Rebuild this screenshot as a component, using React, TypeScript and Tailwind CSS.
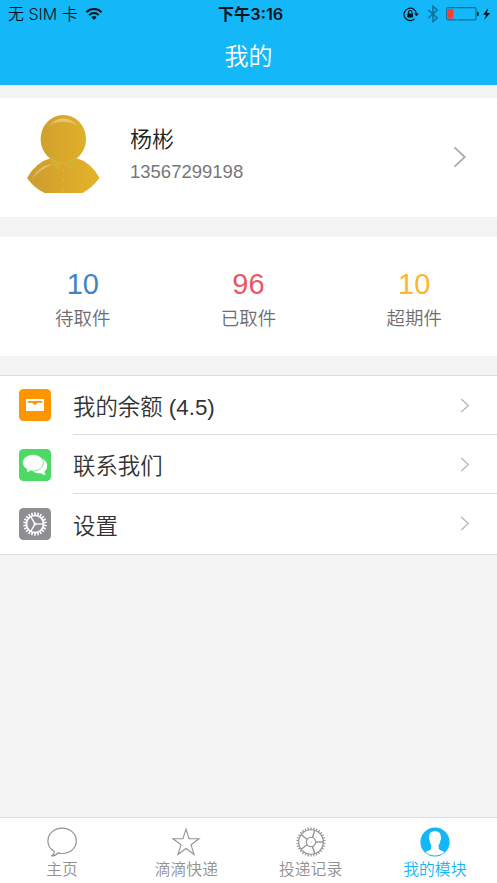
import React from 'react';

const stats = [
  { value: '10', label: '待取件', color: 'text-[#3d85c6]' },
  { value: '96', label: '已取件', color: 'text-[#ec5565]' },
  { value: '10', label: '超期件', color: 'text-[#fdb62b]' },
];

const Wifi = () => (
  <svg className="ml-[7px] h-[14px] w-[18px]" viewBox="0 0 18 14" fill="none" stroke="#03151d" strokeWidth="2">
    <path d="M1.4 5.200a10.800 10.800 0 0 1 15.200 0" />
    <path d="M4.200 8.100a6.800 6.800 0 0 1 9.600 0" />
    <path d="M6.400 10.300a3.700 3.700 0 0 1 5.200 0L9 13z" fill="#03151d" stroke="none" />
  </svg>
);

const RotationLock = () => (
  <svg className="h-[15px] w-[17px]" viewBox="0 0 17 15" fill="none" stroke="#03151d">
    <path d="M13.400 7A6.200 6.200 0 1 0 11.600 11.800" strokeWidth="1.200" />
    <path d="M11 6.600h4.900l-2.400 2.700z" fill="#03151d" stroke="none" />
    <rect x="4.400" y="6.400" width="5.600" height="4.200" rx=".5" fill="#03151d" stroke="none" />
    <path d="M5.500 7V5.200a1.700 1.700 0 0 1 3.400 0V7" strokeWidth="1.100" />
  </svg>
);

const Bluetooth = () => (
  <svg className="ml-[7px] h-[18px] w-[12px]" viewBox="0 0 12 18" fill="none" stroke="#0a7198" strokeWidth="1.500">
    <path d="M1.300 5l9 8L6 16.600V1.400L10.300 5l-9 8" />
  </svg>
);

const Battery = () => (
  <svg className="ml-[7px] h-[14px] w-[46px]" viewBox="0 0 46 14">
    <rect x=".7" y=".7" width="29.400" height="12.200" rx="1.600" fill="none" stroke="#0a7198" strokeWidth="1.200" />
    <rect x="1.800" y="2" width="5.400" height="9.600" fill="#ff3b30" />
    <path d="M31.200 4.500q1.700.3 1.700 2.400t-1.700 2.400z" fill="#03151d" />
    <path d="M42.300 1l-5.200 6.700h3L38.200 13l6-7.100h-3.200z" fill="#03151d" />
  </svg>
);

const Avatar = () => (
  <svg className="mb-[10px] h-[80px] w-[74px] shrink-0" viewBox="0 0 74 80">
    <defs>
      <linearGradient id="gold" x1="0" x2="74" y1="0" y2="0" gradientUnits="userSpaceOnUse">
        <stop offset="0" stopColor="#cc9c2e" />
        <stop offset="1" stopColor="#e5b329" />
      </linearGradient>
      <linearGradient id="shine" x1="0" x2="0" y1="0" y2="1">
        <stop offset="0" stopColor="#fff" stopOpacity=".4" />
        <stop offset="1" stopColor="#fff" stopOpacity=".12" />
      </linearGradient>
    </defs>
    <path d="M1 65Q10 49 25 45h25q15 4 23.500 20Q66 75 56.500 80H18.500Q8 75 1 65z" fill="url(#gold)" />
    <ellipse cx="37.300" cy="26" rx="22.700" ry="24" fill="url(#gold)" />
    <path d="M25 45.500q5 3.800 11.500 4.500l-4.500 5.500q-4.500-4-7-10zM50 45.500q-5 3.800-11.500 4.500l4.500 5.500q4.500-4 7-10z" fill="#cdb034" stroke="#dcbf3c" strokeWidth=".5" />
    <path d="M22 14q6-8.500 15.300-8.500T52.500 14q-6-5-15.200-5T22 14z" fill="url(#shine)" />
    <path d="M5 68Q11 53 27 51Q14 56 5 68z" fill="url(#shine)" />
    <g fill="#e3be52">
      <circle cx="37.500" cy="57.500" r=".8" />
      <circle cx="37.500" cy="67.500" r=".8" />
      <circle cx="37.500" cy="77.500" r=".8" />
    </g>
  </svg>
);

const Chevron = ({ className }: { className: string }) => (
  <svg className={className} viewBox="0 0 10 16" fill="none" stroke="currentColor" strokeWidth="1.300">
    <path d="M1 1l7.500 7L1 15" />
  </svg>
);

const WalletIcon = () => (
  <svg className="mb-px size-8" viewBox="0 0 32 32">
    <rect width="32" height="32" rx="4.500" fill="#ff9500" />
    <rect x="7" y="10" width="18" height="12" rx=".8" fill="#fff" />
    <path d="M8.700 12h14.600v1.700h-4.200q-1.200.2-1.700 1.200-.4.900-1.400.9t-1.400-.9q-.5-1-1.700-1.200H8.700z" fill="#ff9500" />
  </svg>
);

const ChatIcon = () => (
  <svg className="size-8" viewBox="0 0 32 32">
    <rect width="32" height="32" rx="4.500" fill="#4cd964" />
    <path d="M22 9c3.800 1.500 6.200 4.300 6.200 7.800 0 2.300-1 4.300-2.700 5.700.1 1.300.5 2.500 1.200 3.500-2 0-3.700-.7-4.900-1.700-3.300.3-6.300-.5-8.300-2z" fill="#fff" />
    <path d="M14 5.500c5.900 0 10.400 3.600 10.400 8.300S19.900 22.100 14 22.100c-.9 0-1.800-.1-2.600-.3-1.200 1-2.600 1.700-4.200 1.800.7-.9.900-2.100.7-3.300-2.600-1.500-4.300-3.800-4.300-6.500 0-4.700 4.500-8.300 10.400-8.300z" fill="#fff" stroke="#4cd964" strokeWidth=".7" />
  </svg>
);

const spokes = (n: number, start: number) => Array.from({ length: n }, (_, i) => start + (i * 360) / n);

const SettingsIcon = () => (
  <svg className="size-8" viewBox="0 0 32 32" fill="none" stroke="#fff">
    <rect width="32" height="32" rx="4.500" fill="#8e8e93" stroke="none" />
    <circle cx="16" cy="16" r="8.500" strokeWidth="1.700" />
    {spokes(22, 0).map((a) => (
      <path key={a} d="M16 4.200v3.200" strokeWidth="1.600" transform={`rotate(${a} 16 16)`} />
    ))}
    {spokes(3, 90).map((a) => (
      <path key={a} d="M16 15V7.500" strokeWidth="1.300" transform={`rotate(${a} 16 16)`} />
    ))}
    <circle cx="16" cy="16" r="1.500" fill="#fff" stroke="none" />
  </svg>
);

const HomeIcon = () => (
  <svg className="size-[30px]" viewBox="0 0 30 30" fill="none" stroke="currentColor" strokeWidth="1.200">
    <path d="M15.200 1.200C7.200 1.200.9 6.800.9 13.900c0 4.600 2.400 8.100 6.300 10.400.3 1.900-.9 3.600-3 4.700 3-.1 5.300-1 6.500-3.100 1.300.4 2.900.6 4.500.6 8 0 14.100-5.500 14.100-12.600S23.200 1.200 15.200 1.200z" />
  </svg>
);

const StarIcon = () => (
  <svg className="size-[30px]" viewBox="0 0 30 30" fill="none" stroke="currentColor" strokeWidth="1.100">
    <path d="M15 2.200l3.100 9.500h10l-8.100 6.100 3.100 9.700-8.100-6-8.100 6 3.100-9.700-8.100-6.100h10z" />
  </svg>
);

const RecordIcon = () => (
  <svg className="size-[30px]" viewBox="0 0 30 30" fill="none" stroke="currentColor" strokeWidth="1.100">
    <circle cx="15" cy="15" r="12.300" />
    <circle cx="15" cy="15" r="4.700" />
    <circle cx="15" cy="15" r=".6" fill="currentColor" stroke="none" />
    {spokes(30, 0).map((a) => (
      <path key={a} d="M15 .4v2.400" strokeWidth="1.200" transform={`rotate(${a} 15 15)`} />
    ))}
    {spokes(5, 18).map((a) => (
      <path key={a} d="M15 10.300V2.700" strokeWidth="1.400" transform={`rotate(${a} 15 15)`} />
    ))}
  </svg>
);

const MeIcon = () => (
  <svg className="size-[30px]" viewBox="0 0 30 30">
    <circle cx="15" cy="15" r="14.600" fill="#14b7f5" />
    <path d="M15 4.200c4.200 0 6 2.300 5.800 5.800.6.400.4 2.600-.4 3.200-.2 2.200-.8 3.500-1.700 4.600v3.400c.3 2.100 3.800 2.400 6 3.900A13.600 13.600 0 0 1 15 28.400 13.600 13.600 0 0 1 5.300 25.100c2.200-1.500 5.700-1.800 6-3.900v-3.400c-.9-1.100-1.500-2.400-1.700-4.600-.8-.6-1-2.800-.4-3.200-.2-3.500 1.600-5.800 5.800-5.800z" fill="#fff" />
  </svg>
);

const menu = [
  { label: '我的余额 (4.5)', icon: <WalletIcon /> },
  { label: '联系我们', icon: <ChatIcon /> },
  { label: '设置', icon: <SettingsIcon /> },
];

const tabs = [
  { label: '主页', icon: <HomeIcon />, color: 'text-[#929292]' },
  { label: '滴滴快递', icon: <StarIcon />, color: 'text-[#929292]' },
  { label: '投递记录', icon: <RecordIcon />, color: 'text-[#929292]' },
  { label: '我的模块', icon: <MeIcon />, color: 'text-[#14b7f5]' },
];

const App = () => {
  return (
    <div className="flex h-[883px] w-[497px] flex-col overflow-hidden bg-[#f4f4f4] font-['Liberation_Sans','Noto_Sans_CJK_SC',sans-serif] font-[350]">
      {/* Header */}
      <header className="h-[85px] shrink-0 bg-[#14b7f7]">
        <div className="grid h-[28px] grid-cols-3 items-center font-['Inter','Noto_Sans_CJK_SC',sans-serif] text-[16px] text-[#03151d]">
          <div className="flex items-center pl-2 font-[350] whitespace-nowrap">
            无 SIM 卡
            <Wifi />
          </div>
          <div className="pl-1 text-center text-[16.300px] font-semibold">下午3:16</div>
          <div className="flex items-center justify-end pr-[5px]">
            <RotationLock />
            <Bluetooth />
            <Battery />
          </div>
        </div>
        <h1 className="text-center text-[24px] leading-[57px] text-white">我的</h1>
      </header>

      {/* Profile */}
      <section className="mt-[13px] flex h-[119px] shrink-0 items-center bg-white pr-[30px] pl-[26px]">
        <Avatar />
        <div className="mb-[6px] ml-[30px] flex-1">
          <p className="text-[22px] leading-[34px] text-[#222]">杨彬</p>
          <p className="text-[18.500px] leading-[30px] text-[#777]">13567299198</p>
        </div>
        <Chevron className="mb-px h-[22px] w-[14px] text-[#aaa]" />
      </section>

      {/* Stats */}
      <section className="mt-5 grid h-[119px] shrink-0 grid-cols-3 bg-white pt-[30px] text-center">
        {stats.map((s) => (
          <div key={s.label}>
            <p className={`text-[29px] leading-[34px] ${s.color}`}>{s.value}</p>
            <p className="text-[18.500px] leading-[36px] text-[#6d6d72]">{s.label}</p>
          </div>
        ))}
      </section>

      {/* Menu */}
      <ul className="mt-[19px] shrink-0 border-y border-[#dcdcdc] bg-white">
        {menu.map((item, i) => (
          <li key={item.label} className="flex h-[59.200px] items-center pl-[19px]">
            {item.icon}
            <div
              className={`ml-[22px] flex h-full flex-1 items-center justify-between pr-[27px] ${
                i < menu.length - 1 ? 'border-b border-[#dcdcdc]' : ''
              }`}
            >
              <span className="pt-[5px] text-[22.400px] text-[#333]">{item.label}</span>
              <Chevron className="h-[15px] w-[10px] text-[#b5b5b8]" />
            </div>
          </li>
        ))}
      </ul>

      {/* Tab bar */}
      <nav className="mt-auto grid h-[66px] shrink-0 grid-cols-4 border-t border-[#dcdcdc] bg-white">
        {tabs.map((tab) => (
          <div key={tab.label} className={`flex flex-col items-center pt-[9px] ${tab.color}`}>
            {tab.icon}
            <span className="text-[15.800px] leading-[25px]">{tab.label}</span>
          </div>
        ))}
      </nav>
    </div>
  );
};

export default App;
